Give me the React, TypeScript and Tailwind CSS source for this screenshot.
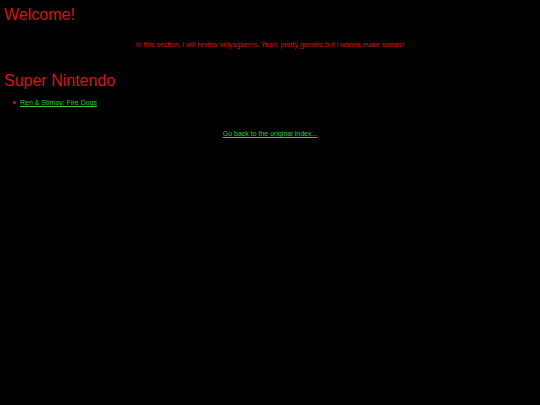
export default function App() {
  return (
    <div className="min-h-[405px] bg-black text-[#dd1111] px-[4px] pt-[4px]" style={{ fontFamily: '"Comic Sans MS", "Liberation Sans", sans-serif' }}>
      <h1 className="text-[16px] leading-[22px]">Welcome!</h1>
      <p className="text-center text-[7px] leading-[9px] mt-[14px]">
        In this section, i will review vidyagaems. Yeah, pretty generic but i wanna make somes!
      </p>
      <h1 className="text-[16px] leading-[22px] mt-[21px]">Super Nintendo</h1>
      <ul className="pl-[9px] mt-[6px] text-[7px] leading-[9px]">
        <li className="flex items-center gap-[4px]">
          <span className="w-[3px] h-[3px] rounded-full bg-[#dd1111]" />
          <a href="#" className="text-[#33cc33] underline">Ren &amp; Stimoy: Fire Dogs</a>
        </li>
      </ul>
      <p className="text-center text-[7px] leading-[9px] mt-[22px]">
        <a href="#" className="text-[#33cc33] underline">Go back to the original index...</a>
      </p>
    </div>
  );
}
